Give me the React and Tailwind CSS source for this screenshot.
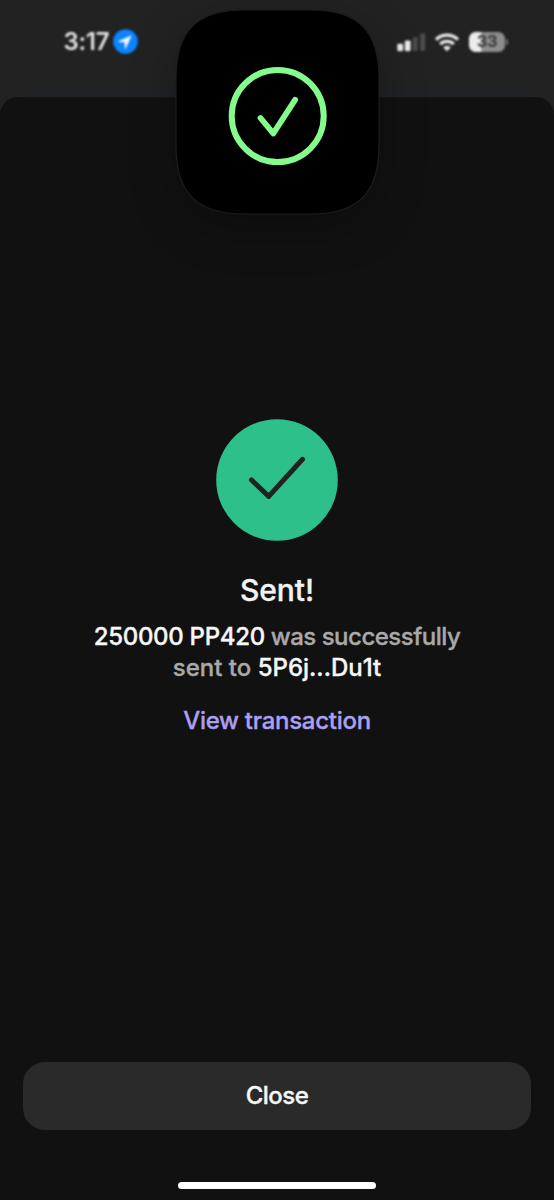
function StatusBar() {
  return (
    <header className="flex h-[85px] items-start justify-between pr-[46px] pl-[63.5px] pt-[28px] blur-[0.8px]">
      <div className="flex h-[27px] items-center gap-[3px]">
        <span className="w-[46.5px] whitespace-nowrap pt-px text-[24px] leading-none font-semibold tracking-[-0.3px] text-[#e4e4e4]">3:17</span>
        <svg width="25" height="25" viewBox="0 0 25 25">
          <circle cx="12.5" cy="12.5" r="12.3" fill="#0a84ff" />
          <path d="M18.8 6.2 5.3 12.3q-.7.5.2.8l6 .2.3 6.1q.3.9.9.1Z" fill="#f2f7ff" />
        </svg>
      </div>
      <div className="flex h-[27px] items-center">
        <svg width="29" height="20" viewBox="0 0 29 20">
          <rect x="0.3" y="11.8" width="5.8" height="7.4" rx="1.4" fill="#ececec" />
          <rect x="7.8" y="8.6" width="5.8" height="10.6" rx="1.4" fill="#ececec" />
          <rect x="15.7" y="5" width="5" height="14" rx="1.4" fill="#4c4c4c" />
          <rect x="23.2" y="1.2" width="5" height="17.8" rx="1.4" fill="#4c4c4c" />
        </svg>
        <svg className="ml-[8px]" width="26" height="20" viewBox="0 0 26 20" fill="none" stroke="#ececec" strokeWidth="3.3">
          <path d="M2 7.6a15.6 15.6 0 0 1 22 0" />
          <path d="M6.2 12.1a9.6 9.6 0 0 1 13.6 0" />
          <path d="M9.1 15.3a5.5 5.5 0 0 1 7.8 0L13 19.3Z" fill="#ececec" stroke="none" />
        </svg>
        <div className="ml-[9px] flex h-[20px] w-[36px] items-center justify-center rounded-[6.5px] bg-linear-to-r from-[#ececec] from-34% to-[#8d8d8d] to-35% text-[16.5px] leading-none font-bold tracking-[-0.3px] text-[#383838]">33</div>
        <div className="ml-[1px] h-[6px] w-[2px] rounded-r-full bg-[#777777]" />
      </div>
    </header>
  );
}

function Island() {
  return (
    <svg className="absolute top-[9px] left-[175px] drop-shadow-[0_14px_22px_rgba(0,0,0,0.28)]" width="206" height="207" viewBox="0 0 206 207" fill="none">
      <path d="M1 69C1 22 22 1 69 1H136C183 1 204 22 204 69V137C204 184 183 205 136 205H69C22 205 1 184 1 137Z" fill="#000" stroke="#1d1d1d" strokeWidth="1.2" />
      <circle cx="102.7" cy="107" r="46" stroke="#84fb8b" strokeWidth="6" />
      <path d="M85.5 109 98.3 124.4 120.1 90.8" stroke="#84fb8b" strokeWidth="5.8" strokeLinecap="round" strokeLinejoin="round" />
    </svg>
  );
}

export default function App() {
  return (
    <div className="relative flex h-[1200px] w-[554px] flex-col overflow-hidden bg-[#222222] font-['Inter','Liberation_Sans',sans-serif] antialiased">
      <StatusBar />
      <div className="mx-[24px] h-[12px] shrink-0 rounded-t-[12px] bg-[#202225] blur-[1px]" />
      <main className="flex grow flex-col items-center rounded-t-[18px] bg-[#111111] px-[23px] pt-[322px] [-webkit-text-stroke:0.35px_currentColor]">
        <svg width="122" height="122" viewBox="0 0 122 122" fill="none">
          <circle cx="61" cy="61" r="60.8" fill="#2ec08b" />
          <path d="M35.5 61 52.7 77.4 86.5 40.3" stroke="#202321" strokeWidth="5" strokeLinecap="round" strokeLinejoin="round" />
        </svg>
        <h1 className="mt-[31px] text-[30px] leading-[36px] font-medium tracking-[-0.1px] text-[#f2f2f2]">Sent!</h1>
        <p className="mt-[13px] text-center text-[24px] leading-[31px] font-medium whitespace-nowrap text-[#a9a9a9]">
          <span className="tracking-[-0.3px] text-[#f7f7f7]">250000 PP420</span>
          <span className="tracking-[-0.5px]"> was successfully</span>
          <br />
          sent to <span className="text-[#f7f7f7]">5P6j...Du1t</span>
        </p>
        <a className="mt-[22px] text-[24px] leading-[31px] font-medium tracking-[-0.27px] whitespace-nowrap text-[#ab9ff2]">View transaction</a>
        <button className="mt-auto flex h-[67.5px] w-[508px] shrink-0 items-center justify-center rounded-[22px] bg-[#2a2a2a] text-[24px] font-medium tracking-[-0.5px] text-[#f7f7f7]">Close</button>
        <div className="mt-[52px] mb-[11.5px] h-[7px] w-[198px] shrink-0 rounded-full bg-white" />
      </main>
      <Island />
    </div>
  );
}
